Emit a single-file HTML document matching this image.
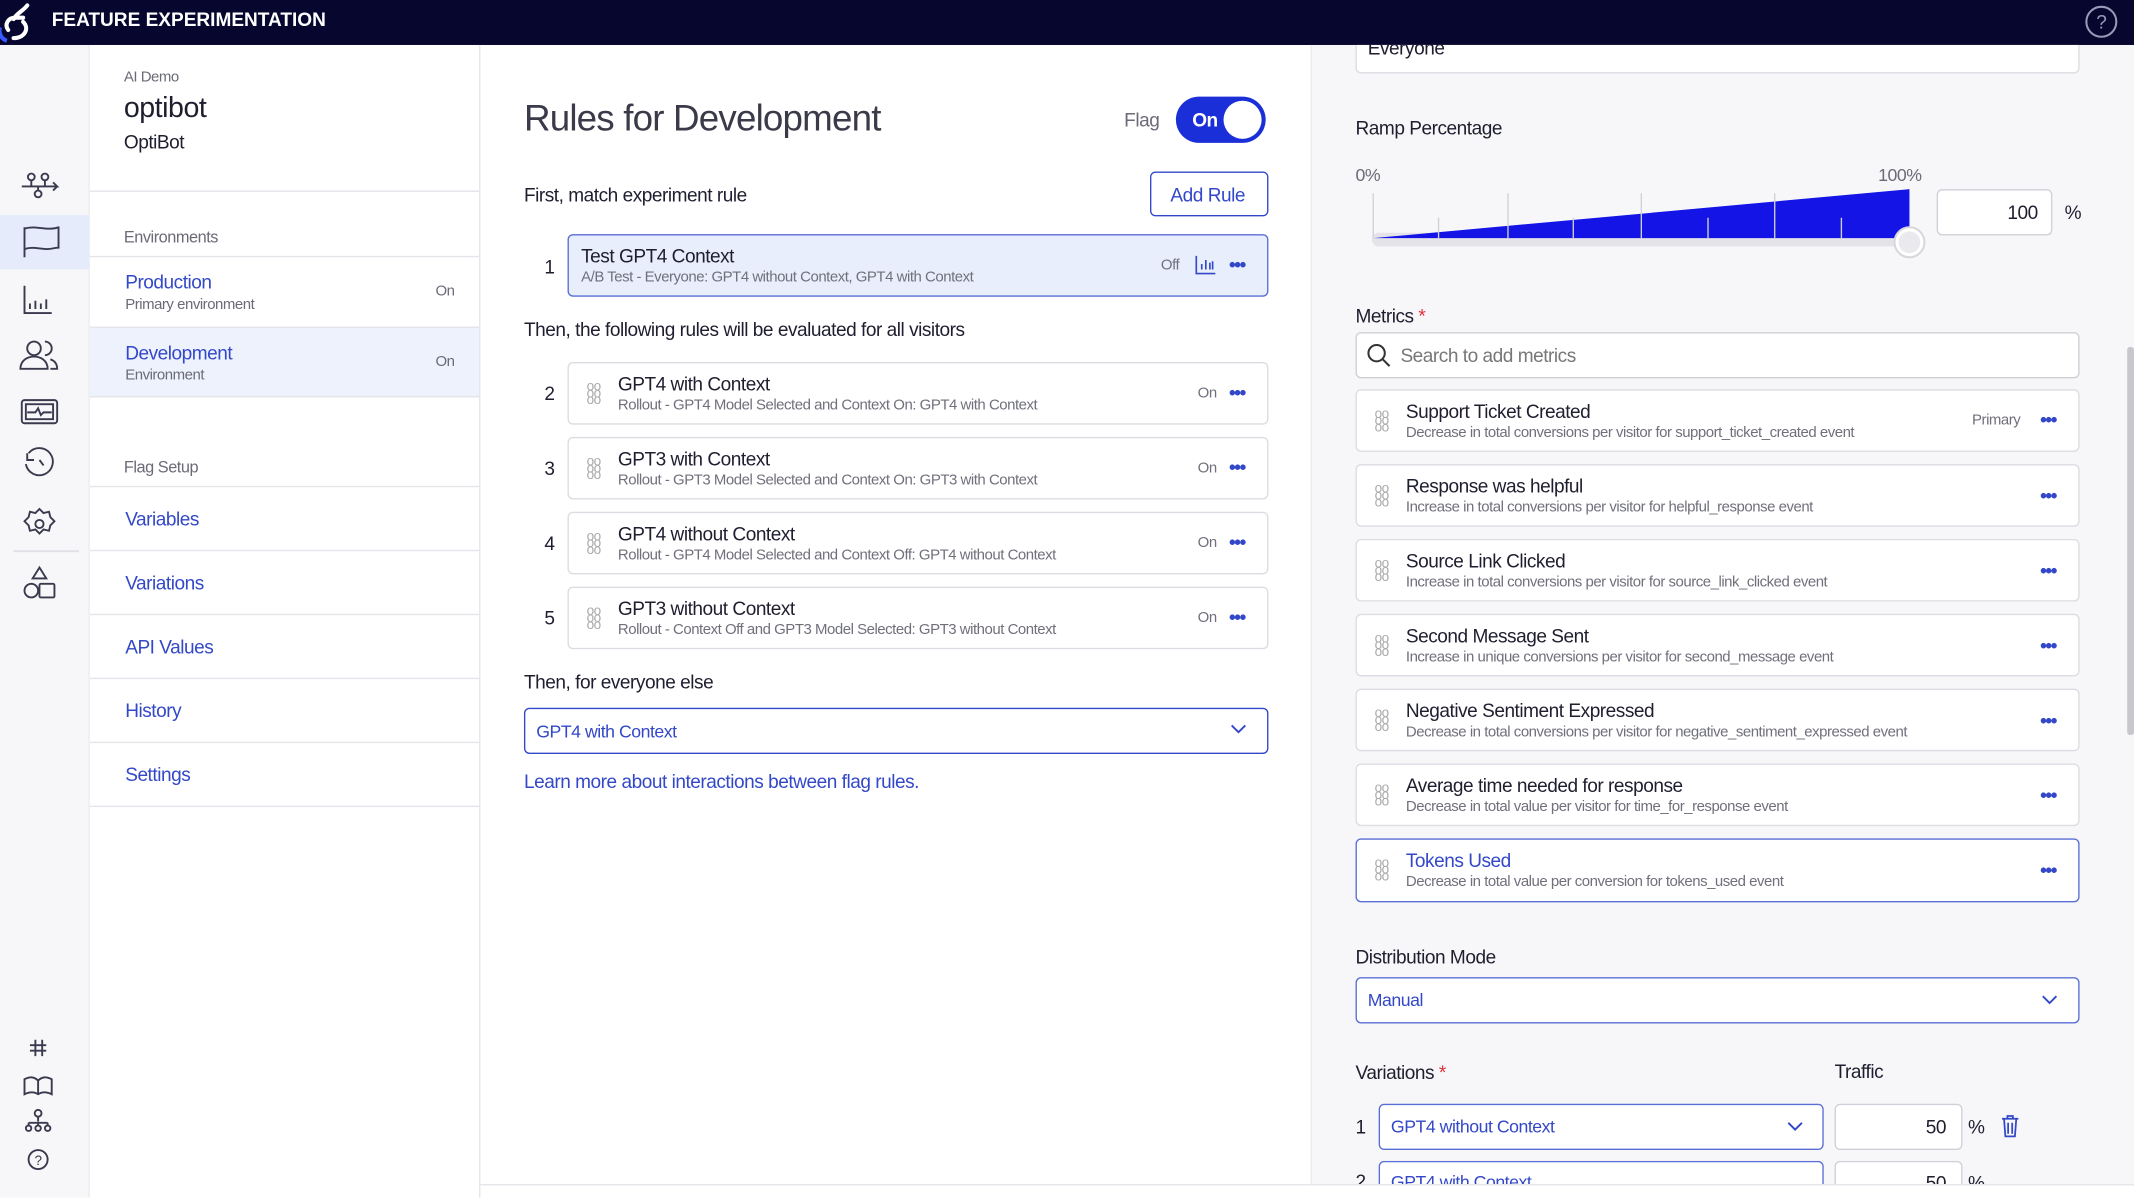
<!DOCTYPE html>
<html><head><meta charset="utf-8">
<style>
*{box-sizing:border-box;margin:0;padding:0}
html,body{width:2134px;height:1198px;overflow:hidden;background:#fff}
#w{position:absolute;left:0;top:0;width:1568px;height:880px;transform:scale(1.36097);transform-origin:0 0;font-family:"Liberation Sans",sans-serif;color:#1e1e2f;letter-spacing:-0.35px}
.a{position:absolute}
.blue{color:#3348c8}
.grey{color:#6b6b78}
.box{position:absolute;background:#fff;border:1px solid #dcdce2;border-radius:4px}
.t{font-size:14px}
.s{font-size:11px;color:#70707c}
.dots{position:absolute;color:#3348c8;font-size:14px;font-weight:bold;letter-spacing:-1px}
</style></head><body><div id="w">
<div class="a" style="left:0;top:0;width:1568px;height:33px;background:#06062f"></div>

<!-- icon rail -->
<div class="a" style="left:0;top:33px;width:66px;height:847px;background:#f7f7f9;border-right:1px solid #ececf0"></div>
<div class="a" style="left:0;top:158px;width:66px;height:40px;background:#e5ebfb"></div>
<svg class="a" style="left:0;top:33px" width="66" height="847" fill="none" stroke="#3a3a4e" stroke-width="1.4">
<circle cx="23" cy="97" r="2.5"/><circle cx="33" cy="97" r="2.5"/><path d="M16 104h26l-3-3M42 104l-3 3"/><path d="M23 99.5v4.5M33 99.5v4.5M28 104v3"/><circle cx="28" cy="109.5" r="2.5"/>
<path d="M18 134v22M18 135c6-2 12 0 18 0s6-1 7-1v15c-3 0-5 1-8 1-6 0-11-2-17 0"/>
<path d="M18 177v20h20M22 194v-4M26 194v-6M30 194v-4M34 194v-7"/>
<circle cx="25" cy="223" r="5"/><path d="M15 238c0-6 5-9 10-9s10 3 10 9z"/><path d="M33 218a5 5 0 010 10M37 231c3 1 5 3 5 7h-5"/>
<rect x="16" y="261" width="26" height="17" rx="2"/><rect x="19" y="264" width="20" height="11"/><path d="M20 270h6l2-3 2 5 2-2h6"/>
<path d="M19 308a10 10 0 102-8M20 300v5h5M29 305l3 4"/>
<circle cx="29" cy="352" r="3"/><path d="M29 341l3 3 4-1 1 4 3 3-3 3-1 4-4-1-3 3-3-3-4 1-1-4-3-3 3-3 1-4 4 1z"/>
<path d="M10 372h48" stroke="#e0e0e6"/>
<path d="M29 384l-5 8h10z"/><circle cx="23" cy="401" r="5"/><rect x="29" y="396" width="11" height="10" rx="1"/>
<path d="M26 731v12M31 731v12M22 735h12M22 739h12"/>
<path d="M18 760c4-2 7-2 10 1 3-3 6-3 10-1v11c-4-2-7-2-10 0-3-2-6-2-10 0zM28 761v10"/>
<circle cx="28" cy="785" r="2.5"/><path d="M28 788v3M21 792h14M21 792v2M28 792v2M35 792v2"/><circle cx="21" cy="796" r="2"/><circle cx="28" cy="796" r="2"/><circle cx="35" cy="796" r="2"/>
<circle cx="28" cy="819" r="7"/><text x="28" y="823" font-size="10" fill="#3a3a4e" stroke="none" text-anchor="middle" font-family="Liberation Sans">?</text>
</svg>

<!-- nav panel -->
<div class="a" style="left:66px;top:33px;width:287px;height:847px;background:#fff;border-right:1px solid #e4e4ea"></div>
<div class="a grey" style="left:91px;top:51px;font-size:11px">AI Demo</div>
<div class="a" style="left:91px;top:68px;font-size:21px">optibot</div>
<div class="a" style="left:91px;top:96px;font-size:14px">OptiBot</div>
<div class="a" style="left:66px;top:140px;width:286px;border-top:1px solid #e4e4ea"></div>
<div class="a grey" style="left:91px;top:167px;font-size:12px">Environments</div>
<div class="a" style="left:66px;top:188px;width:286px;border-top:1px solid #e4e4ea"></div>
<div class="a blue" style="left:92px;top:199px;font-size:14px">Production</div>
<div class="a grey" style="left:92px;top:218px;font-size:11px">Primary environment</div>
<div class="a grey" style="left:320px;top:208px;font-size:11px">On</div>
<div class="a" style="left:66px;top:240px;width:286px;height:52px;background:#eef2fc;border-top:1px solid #e4e4ea;border-bottom:1px solid #e4e4ea"></div>
<div class="a blue" style="left:92px;top:251px;font-size:14px">Development</div>
<div class="a grey" style="left:92px;top:270px;font-size:11px">Environment</div>
<div class="a grey" style="left:320px;top:260px;font-size:11px">On</div>
<div class="a grey" style="left:91px;top:336px;font-size:12px">Flag Setup</div>
<div class="a" style="left:66px;top:357px;width:286px;border-top:1px solid #e4e4ea"></div>
<div class="a blue" style="left:92px;top:373px;font-size:14px">Variables</div>
<div class="a" style="left:66px;top:404px;width:286px;border-top:1px solid #e4e4ea"></div>
<div class="a blue" style="left:92px;top:420px;font-size:14px">Variations</div>
<div class="a" style="left:66px;top:451px;width:286px;border-top:1px solid #e4e4ea"></div>
<div class="a blue" style="left:92px;top:467px;font-size:14px">API Values</div>
<div class="a" style="left:66px;top:498px;width:286px;border-top:1px solid #e4e4ea"></div>
<div class="a blue" style="left:92px;top:514px;font-size:14px">History</div>
<div class="a" style="left:66px;top:545px;width:286px;border-top:1px solid #e4e4ea"></div>
<div class="a blue" style="left:92px;top:561px;font-size:14px">Settings</div>
<div class="a" style="left:66px;top:592px;width:286px;border-top:1px solid #e4e4ea"></div>

<!-- middle -->
<div class="a" style="left:353px;top:870px;width:610px;border-top:1px solid #e4e4ea"></div>
<div class="a" style="left:385px;top:72px;font-size:27px;color:#3a3a48;letter-spacing:-0.6px">Rules for Development</div>
<div class="a grey" style="left:826px;top:80px;font-size:14px">Flag</div>
<div class="a" style="left:864px;top:71px;width:66px;height:34px;border-radius:17px;background:#1b2fd8"></div>
<div class="a" style="left:876px;top:80px;color:#fff;font-size:14px;font-weight:bold">On</div>
<div class="a" style="left:899px;top:74px;width:28px;height:28px;border-radius:50%;background:#fff"></div>
<div class="a t" style="left:385px;top:135px">First, match experiment rule</div>
<div class="a" style="left:845px;top:126px;width:87px;height:33px;border:1px solid #3348c8;border-radius:4px;background:#fff"></div>
<div class="a blue t" style="left:860px;top:135px">Add Rule</div>
<div class="a t" style="left:400px;top:188px">1</div>
<div class="a" style="left:417px;top:172px;width:515px;height:46px;background:#e9eefc;border:1px solid #5a6fd6;border-radius:4px"></div>
<div class="a t" style="left:427px;top:180px">Test GPT4 Context</div>
<div class="a s" style="left:427px;top:198px">A/B Test - Everyone: GPT4 without Context, GPT4 with Context</div>
<div class="a s" style="left:853px;top:189px">Off</div>
<svg class="a" style="left:878px;top:187px" width="16" height="15" fill="none" stroke="#3348c8" stroke-width="1.2"><path d="M1 1v13h14M5 11V7M8 11V4M11 11V6M13 11V5"/></svg>
<div class="dots" style="left:903px;top:186px">•••</div>
<div class="a t" style="left:385px;top:234px">Then, the following rules will be evaluated for all visitors</div>

<div class="a t" style="left:400px;top:281px">2</div>
<div class="box" style="left:417px;top:266px;width:515px;height:46px"></div>
<div class="a t" style="left:454px;top:274px">GPT4 with Context</div>
<div class="a s" style="left:454px;top:292px">Rollout - GPT4 Model Selected and Context On: GPT4 with Context</div>
<div class="a s" style="left:880px;top:283px">On</div><div class="dots" style="left:903px;top:280px">•••</div>
<div class="a" style="left:431px;top:282px;font-size:10px;color:#aaa;line-height:5px">oo<br>oo<br>oo</div>

<div class="a t" style="left:400px;top:336px">3</div>
<div class="box" style="left:417px;top:321px;width:515px;height:46px"></div>
<div class="a t" style="left:454px;top:329px">GPT3 with Context</div>
<div class="a s" style="left:454px;top:347px">Rollout - GPT3 Model Selected and Context On: GPT3 with Context</div>
<div class="a s" style="left:880px;top:338px">On</div><div class="dots" style="left:903px;top:335px">•••</div>
<div class="a" style="left:431px;top:337px;font-size:10px;color:#aaa;line-height:5px">oo<br>oo<br>oo</div>

<div class="a t" style="left:400px;top:391px">4</div>
<div class="box" style="left:417px;top:376px;width:515px;height:46px"></div>
<div class="a t" style="left:454px;top:384px">GPT4 without Context</div>
<div class="a s" style="left:454px;top:402px">Rollout - GPT4 Model Selected and Context Off: GPT4 without Context</div>
<div class="a s" style="left:880px;top:393px">On</div><div class="dots" style="left:903px;top:390px">•••</div>
<div class="a" style="left:431px;top:392px;font-size:10px;color:#aaa;line-height:5px">oo<br>oo<br>oo</div>

<div class="a t" style="left:400px;top:446px">5</div>
<div class="box" style="left:417px;top:431px;width:515px;height:46px"></div>
<div class="a t" style="left:454px;top:439px">GPT3 without Context</div>
<div class="a s" style="left:454px;top:457px">Rollout - Context Off and GPT3 Model Selected: GPT3 without Context</div>
<div class="a s" style="left:880px;top:448px">On</div><div class="dots" style="left:903px;top:445px">•••</div>
<div class="a" style="left:431px;top:447px;font-size:10px;color:#aaa;line-height:5px">oo<br>oo<br>oo</div>

<div class="a t" style="left:385px;top:493px">Then, for everyone else</div>
<div class="a" style="left:385px;top:520px;width:547px;height:34px;border:1px solid #3348c8;border-radius:4px;background:#fff"></div>
<div class="a blue" style="left:394px;top:530px;font-size:13px">GPT4 with Context</div>
<svg class="a" style="left:904px;top:532px" width="12" height="8" fill="none" stroke="#3348c8" stroke-width="1.4"><path d="M1 1l5 5 5-5"/></svg>
<div class="a blue t" style="left:385px;top:566px">Learn more about interactions between flag rules.</div>

<!-- right panel -->
<div class="a" style="left:963px;top:33px;width:605px;height:847px;background:#f7f7f9;border-left:1px solid #ececf0"></div>
<div class="a" style="left:1563px;top:255px;width:5px;height:285px;background:#c8c8cc;border-radius:2px"></div>
<div class="a" style="left:996px;top:20px;width:532px;height:34px;background:#fff;border:1px solid #dcdce2;border-radius:4px"></div>
<div class="a" style="left:0;top:0;width:1568px;height:33px;background:#06062f;z-index:1"></div>
<div class="a" style="left:0;top:0;z-index:2"><div class="a" style="left:38px;top:6px;color:#fff;font-size:14px;font-weight:bold;letter-spacing:0;white-space:nowrap">FEATURE EXPERIMENTATION</div>
<svg class="a" style="left:0;top:0" width="34" height="33" viewBox="0 0 34 33"><path d="M6 22c-3-4 0-9 5-9h6M10 28c8 0 12-7 7-12M20 4c-3 4-8 6-10 10" stroke="#fff" stroke-width="3" fill="none" stroke-linecap="round"/><path d="M0 20a8 8 0 005 10" stroke="#3a5aff" stroke-width="3" fill="none"/></svg>
<svg class="a" style="left:1531px;top:3px" width="26" height="26"><circle cx="13" cy="13" r="11" stroke="#9a9ab8" stroke-width="1.5" fill="none"/><text x="13" y="18" font-size="14" fill="#9a9ab8" text-anchor="middle" font-family="Liberation Sans">?</text></svg></div>
<div class="a t" style="left:1005px;top:33px;overflow:hidden;height:10px;line-height:4px">Everyone</div>
<div class="a t" style="left:996px;top:86px">Ramp Percentage</div>
<div class="a grey" style="left:996px;top:121px;font-size:13px">0%</div>
<div class="a grey" style="left:1380px;top:121px;font-size:13px">100%</div>
<svg class="a" style="left:1005px;top:135px" width="420" height="60">
<rect x="3" y="36" width="397" height="10" rx="5" fill="#e4e4e8"/>
<path d="M4 40L398 4V40z" fill="#1414e6"/>
<g stroke="#d0d0d8" stroke-width="1"><path d="M4 7v33M103 7v33M201 7v33M299 7v33M52 25v15M151 25v15M250 25v15M348 25v15"/></g>
<circle cx="398" cy="43" r="11" fill="#fff" stroke="#d6d6dc" stroke-width="1.5"/><circle cx="398" cy="43" r="8" fill="#eaeaee"/>
</svg>
<div class="a" style="left:1423px;top:139px;width:85px;height:34px;background:#fff;border:1px solid #d0d0d8;border-radius:4px"></div>
<div class="a t" style="left:1475px;top:148px">100</div>
<div class="a t" style="left:1517px;top:148px">%</div>

<div class="a t" style="left:996px;top:224px">Metrics <span style="color:#e0303a">*</span></div>
<div class="a" style="left:996px;top:244px;width:532px;height:34px;background:#fff;border:1px solid #cfcfd6;border-radius:4px"></div>
<svg class="a" style="left:1004px;top:252px" width="18" height="18" fill="none" stroke="#333" stroke-width="1.5"><circle cx="7.5" cy="7.5" r="6"/><path d="M12 12l5 5"/></svg>
<div class="a t" style="left:1029px;top:253px;color:#777">Search to add metrics</div>

<div class="box" style="left:996px;top:286px;width:532px;height:46px"></div>
<div class="a t" style="left:1033px;top:294px">Support Ticket Created</div>
<div class="a s" style="left:1033px;top:312px">Decrease in total conversions per visitor for support_ticket_created event</div>
<div class="a s" style="left:1449px;top:303px">Primary</div><div class="dots" style="left:1499px;top:300px">•••</div>
<div class="a" style="left:1010px;top:302px;font-size:10px;color:#aaa;line-height:5px">oo<br>oo<br>oo</div>

<div class="box" style="left:996px;top:341px;width:532px;height:46px"></div>
<div class="a t" style="left:1033px;top:349px">Response was helpful</div>
<div class="a s" style="left:1033px;top:367px">Increase in total conversions per visitor for helpful_response event</div>
<div class="dots" style="left:1499px;top:356px">•••</div>
<div class="a" style="left:1010px;top:357px;font-size:10px;color:#aaa;line-height:5px">oo<br>oo<br>oo</div>

<div class="box" style="left:996px;top:396px;width:532px;height:46px"></div>
<div class="a t" style="left:1033px;top:404px">Source Link Clicked</div>
<div class="a s" style="left:1033px;top:422px">Increase in total conversions per visitor for source_link_clicked event</div>
<div class="dots" style="left:1499px;top:411px">•••</div>
<div class="a" style="left:1010px;top:412px;font-size:10px;color:#aaa;line-height:5px">oo<br>oo<br>oo</div>

<div class="box" style="left:996px;top:451px;width:532px;height:46px"></div>
<div class="a t" style="left:1033px;top:459px">Second Message Sent</div>
<div class="a s" style="left:1033px;top:477px">Increase in unique conversions per visitor for second_message event</div>
<div class="dots" style="left:1499px;top:466px">•••</div>
<div class="a" style="left:1010px;top:467px;font-size:10px;color:#aaa;line-height:5px">oo<br>oo<br>oo</div>

<div class="box" style="left:996px;top:506px;width:532px;height:46px"></div>
<div class="a t" style="left:1033px;top:514px">Negative Sentiment Expressed</div>
<div class="a s" style="left:1033px;top:532px">Decrease in total conversions per visitor for negative_sentiment_expressed event</div>
<div class="dots" style="left:1499px;top:521px">•••</div>
<div class="a" style="left:1010px;top:522px;font-size:10px;color:#aaa;line-height:5px">oo<br>oo<br>oo</div>

<div class="box" style="left:996px;top:561px;width:532px;height:46px"></div>
<div class="a t" style="left:1033px;top:569px">Average time needed for response</div>
<div class="a s" style="left:1033px;top:587px">Decrease in total value per visitor for time_for_response event</div>
<div class="dots" style="left:1499px;top:576px">•••</div>
<div class="a" style="left:1010px;top:577px;font-size:10px;color:#aaa;line-height:5px">oo<br>oo<br>oo</div>

<div class="box" style="left:996px;top:616px;width:532px;height:47px;border-color:#5a6fd6"></div>
<div class="a t blue" style="left:1033px;top:624px">Tokens Used</div>
<div class="a s" style="left:1033px;top:642px">Decrease in total value per conversion for tokens_used event</div>
<div class="dots" style="left:1499px;top:631px">•••</div>
<div class="a" style="left:1010px;top:632px;font-size:10px;color:#aaa;line-height:5px">oo<br>oo<br>oo</div>

<div class="a t" style="left:996px;top:695px">Distribution Mode</div>
<div class="a" style="left:996px;top:718px;width:532px;height:34px;background:#fff;border:1px solid #5a6fd6;border-radius:4px"></div>
<div class="a blue" style="left:1005px;top:727px;font-size:13px">Manual</div>
<svg class="a" style="left:1500px;top:731px" width="12" height="8" fill="none" stroke="#3348c8" stroke-width="1.4"><path d="M1 1l5 5 5-5"/></svg>

<div class="a t" style="left:996px;top:780px">Variations <span style="color:#e0303a">*</span></div>
<div class="a t" style="left:1348px;top:779px">Traffic</div>
<div class="a t" style="left:996px;top:820px">1</div>
<div class="a" style="left:1013px;top:811px;width:327px;height:34px;background:#fff;border:1px solid #5a6fd6;border-radius:4px"></div>
<div class="a blue" style="left:1022px;top:820px;font-size:13px">GPT4 without Context</div>
<svg class="a" style="left:1313px;top:824px" width="12" height="8" fill="none" stroke="#3348c8" stroke-width="1.4"><path d="M1 1l5 5 5-5"/></svg>
<div class="a" style="left:1348px;top:811px;width:94px;height:34px;background:#fff;border:1px solid #d0d0d8;border-radius:4px"></div>
<div class="a t" style="left:1415px;top:820px">50</div>
<div class="a t" style="left:1446px;top:820px">%</div>
<svg class="a" style="left:1470px;top:819px" width="14" height="17" fill="none" stroke="#3348c8" stroke-width="1.3"><path d="M1 3h12M5 3V1h4v2M2.5 3l1 13h7l1-13M5.5 6v8M8.5 6v8"/></svg>
<div class="a" style="left:996px;top:853px;width:540px;height:17px;overflow:hidden">
<div class="a t" style="left:0;top:7px">2</div>
<div class="a" style="left:17px;top:0;width:327px;height:34px;background:#fff;border:1px solid #5a6fd6;border-radius:4px"></div>
<div class="a blue" style="left:26px;top:8px;font-size:13px">GPT4 with Context</div>
<div class="a" style="left:352px;top:0;width:94px;height:34px;background:#fff;border:1px solid #d0d0d8;border-radius:4px"></div>
<div class="a t" style="left:419px;top:8px">50</div>
<div class="a t" style="left:450px;top:8px">%</div>
</div>
<div class="a" style="left:963px;top:870px;width:605px;height:10px;background:#fff;border-top:1px solid #e4e4ea"></div>
</div></body></html>
